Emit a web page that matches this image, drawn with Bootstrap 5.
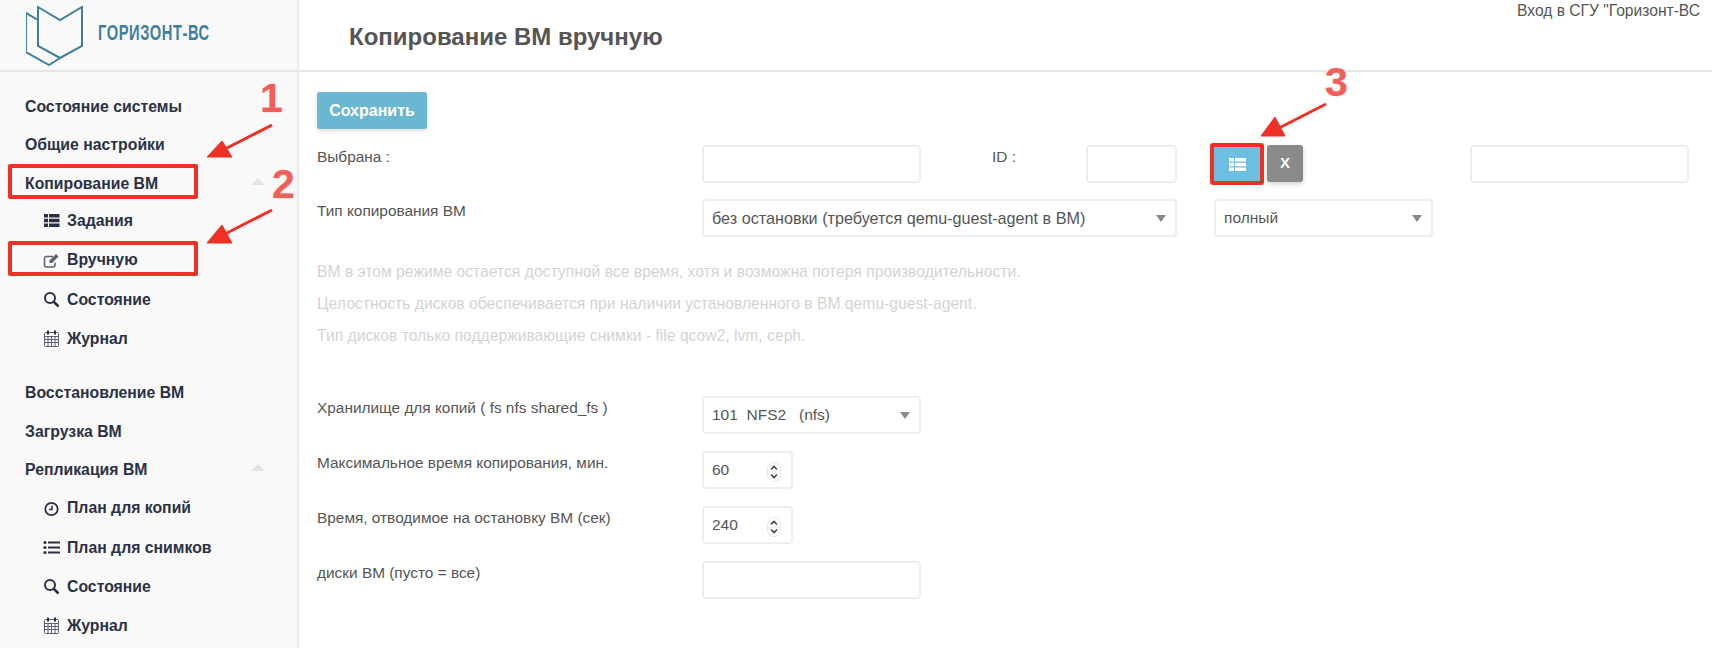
<!DOCTYPE html>
<html lang="ru">
<head>
<meta charset="utf-8">
<title>Копирование ВМ вручную</title>
<link href="https://cdn.jsdelivr.net/npm/bootstrap@5.3.0/dist/css/bootstrap.min.css" rel="stylesheet">
<style>
html,body{height:648px;overflow:hidden;background:#fff}
body{font-family:"Liberation Sans",Arial,sans-serif;font-size:15.5px;color:#555;position:relative}
.side{width:299px;flex:none;height:648px;background:#f9f9f9;border-right:2px solid #eaeaea}
.brand{height:72px;border-bottom:2px solid #e6e6e6;padding-left:26px;gap:8px}
.brand-name{display:inline-block;font-weight:700;font-size:21.5px;color:#3f7f9c;letter-spacing:.8px;line-height:1;margin-top:-3px;transform:scaleX(.685);transform-origin:left center;white-space:nowrap}
.menu{padding-top:16px}
.menu-top{height:38.2px;padding-left:25px;padding-right:32px;font-weight:700;font-size:15.8px;color:#2b3145}
.menu-sub{height:39.2px;padding-left:43px;font-weight:700;font-size:15.8px;color:#2b3145;gap:7px}
.menu-sub svg{width:17px;height:17px;flex:none}
.tight{margin-top:-1.2px}
.caret-up{width:0;height:0;border-left:7px solid transparent;border-right:7px solid transparent;border-bottom:7px solid #e4e4e4;margin-top:-4px}
.spaced{margin-top:16px}
.topbar{height:72px;border-bottom:2px solid #e6e6e6;padding-left:50px}
.page-title{font-size:24px;font-weight:700;color:#555;margin:0;line-height:1;padding-top:4px}
.login-link{top:3px;right:12px;font-size:15.6px;color:#555;white-space:nowrap;line-height:16px}
.work{padding:20px 0 0 18px}
.btn-save{width:110px;height:37px;background:#6ab7d1;border:0;color:#fff;font-weight:700;font-size:16px;border-radius:3px;box-shadow:0 2px 5px rgba(0,0,0,.14);padding:0;margin-bottom:16px;display:block}
.frow{height:38px;margin-bottom:16px}
.frow.tall{margin-bottom:17px}
.lbl{width:385px;flex:none;padding-top:2px;line-height:20px;font-size:15.4px;color:#555;margin:0}
.fld{height:38px;border:2px solid #eee;border-radius:4px;font-size:15.5px;color:#555;padding:0 8px;background-color:#fff;box-shadow:none;font-family:"Liberation Sans",sans-serif}
.w219{width:219px;flex:none}
.w91{width:91px;flex:none}
.w475{width:475px;flex:none;font-size:16.2px}
.id-lbl{width:94px;margin-left:71px;flex:none;padding-top:2px;line-height:20px;margin-bottom:0;font-size:15.4px}
.pick{width:54px;height:42px;margin:-2px 3px 0 33px;background:#6ebee2;border:4px solid #ee3124;border-radius:3px;padding:0}
.clear{width:36px;height:37px;background:#8a8a8a;border:0;border-radius:3px;color:#fff;font-weight:700;font-size:15px;padding:0;box-shadow:0 2px 5px rgba(0,0,0,.18)}
.far{margin-left:167px}
.sel{appearance:none;-webkit-appearance:none;background-image:url("data:image/svg+xml,%3Csvg xmlns='http://www.w3.org/2000/svg' width='10' height='7'%3E%3Cpath d='M0 0h10L5 7z' fill='%23888'/%3E%3C/svg%3E");background-repeat:no-repeat;background-position:right 9px center;background-size:10px 7px}
.gapl{margin-left:37px}
.help{color:#d4d4d4;font-size:15.7px;line-height:20px;margin:0 0 12px}
.help.first{padding-top:9px}
.help.last{margin-bottom:50px}
.num-wrap{width:91px;height:38px}
.spin{right:12px;top:11px;width:14px;height:20px}
.marks{left:0;top:0;width:1712px;height:648px;pointer-events:none}
.digit{font-weight:700;font-size:41px;fill:#f0605a;paint-order:stroke;stroke:#fbd5d2;stroke-width:1px}
</style>
</head>
<body>
<div class="d-flex">
  <aside class="side">
    <div class="brand d-flex align-items-center">
      <svg width="64" height="62" viewBox="0 0 64 62" fill="none" stroke="#3f7f9c" stroke-width="2">
        <path d="M12 16 L0 9 V48 L23 61 L34 54"/>
        <path d="M12 3 L34 16 L56 3 V42 L34 54 L12 42 Z"/>
      </svg>
      <span class="brand-name">ГОРИЗОНТ-ВС</span>
    </div>
    <nav class="menu d-flex flex-column">
      <div class="menu-top d-flex align-items-center">Состояние системы</div>
      <div class="menu-top d-flex align-items-center">Общие настройки</div>
      <div class="menu-top d-flex align-items-center justify-content-between">Копирование ВМ<span class="caret-up"></span></div>
      <div class="menu-sub tight d-flex align-items-center"><svg viewBox="0 0 17 17" fill="#2b3145"><path d="M1 2h4v3.600H1zM6 2h10.500v3.600H6zM1 6.700h4v3.600H1zM6 6.700h10.500v3.600H6zM1 11.400h4v3.600H1zM6 11.400h10.500v3.600H6z"/></svg>Задания</div>
      <div class="menu-sub d-flex align-items-center"><svg viewBox="0 0 17 17" fill="none"><path d="M12 10.500V13a2 2 0 0 1-2 2H3.500a2 2 0 0 1-2-2V6.500a2 2 0 0 1 2-2H10" stroke="#5c6272" stroke-width="1.500"/><path d="M6.500 8.500 13 2l2.500 2.500L9 11H6.500z" fill="#5c6272"/></svg>Вручную</div>
      <div class="menu-sub d-flex align-items-center"><svg viewBox="0 0 17 17" fill="none" stroke="#2b3145" stroke-width="2"><circle cx="7" cy="7" r="5"/><path d="M10.500 10.500l5 5" stroke-width="2.500"/></svg>Состояние</div>
      <div class="menu-sub d-flex align-items-center"><svg viewBox="0 0 17 17" fill="none" stroke="#5c6272" stroke-width="1"><rect x="1.500" y="2.500" width="14" height="14" rx="1"/><path d="M1.500 6.500h14M1.500 9.500h14M1.500 12.500h14M5 6.500v10M8.500 6.500v10M12 6.500v10"/><path d="M5 .5v4M12 .5v4" stroke="#2b3145" stroke-width="2"/></svg>Журнал</div>
      <div class="menu-top d-flex align-items-center spaced">Восстановление ВМ</div>
      <div class="menu-top d-flex align-items-center">Загрузка ВМ</div>
      <div class="menu-top d-flex align-items-center justify-content-between">Репликация ВМ<span class="caret-up"></span></div>
      <div class="menu-sub d-flex align-items-center"><svg viewBox="0 0 17 17" fill="none" stroke="#2b3145"><circle cx="8.500" cy="9" r="6.200" stroke-width="1.800"/><path d="M9 5.500V9.500H6" stroke-width="1.500"/></svg>План для копий</div>
      <div class="menu-sub d-flex align-items-center"><svg viewBox="0 0 17 17" fill="#2b3145"><circle cx="2" cy="3.500" r="1.600"/><circle cx="2" cy="8.500" r="1.600"/><circle cx="2" cy="13.500" r="1.600"/><path d="M5 2.500h12v2H5zM5 7.500h12v2H5zM5 12.500h12v2H5z"/></svg>План для снимков</div>
      <div class="menu-sub d-flex align-items-center"><svg viewBox="0 0 17 17" fill="none" stroke="#2b3145" stroke-width="2"><circle cx="7" cy="7" r="5"/><path d="M10.500 10.500l5 5" stroke-width="2.500"/></svg>Состояние</div>
      <div class="menu-sub d-flex align-items-center"><svg viewBox="0 0 17 17" fill="none" stroke="#5c6272" stroke-width="1"><rect x="1.500" y="2.500" width="14" height="14" rx="1"/><path d="M1.500 6.500h14M1.500 9.500h14M1.500 12.500h14M5 6.500v10M8.500 6.500v10M12 6.500v10"/><path d="M5 .5v4M12 .5v4" stroke="#2b3145" stroke-width="2"/></svg>Журнал</div>
    </nav>
  </aside>
  <main class="flex-grow-1">
    <header class="topbar d-flex align-items-center position-relative">
      <h1 class="page-title">Копирование ВМ вручную</h1>
      <div class="login-link position-absolute">Вход в СГУ "Горизонт-ВС</div>
    </header>
    <div class="work">
      <button class="btn btn-save" type="button">Сохранить</button>
      <div class="frow d-flex align-items-start">
        <label class="lbl">Выбрана :</label>
        <input class="fld w219 form-control" type="text">
        <label class="id-lbl">ID :</label>
        <input class="fld w91 form-control" type="text">
        <button class="btn pick flex-shrink-0 d-flex align-items-center justify-content-center" type="button" aria-label="Список"><svg width="17" height="13" viewBox="0 0 17 13" fill="#fff"><path d="M0 0h5v3.500H0zM6 0h11v3.500H6zM0 4.700h5v3.500H0zM6 4.700h11v3.500H6zM0 9.400h5v3.500H0zM6 9.400h11v3.500H6z"/></svg></button>
        <button class="btn clear flex-shrink-0" type="button">X</button>
        <input class="fld w219 far form-control" type="text">
      </div>
      <div class="frow d-flex align-items-start">
        <label class="lbl">Тип копирования ВМ</label>
        <select class="fld sel w475 form-select"><option>без остановки (требуется qemu-guest-agent в ВМ)</option></select>
        <select class="fld sel w219 gapl form-select"><option>полный</option></select>
      </div>
      <p class="help first">ВМ в этом режиме остается доступной все время, хотя и возможна потеря производительности.</p>
      <p class="help">Целостность дисков обеспечивается при наличии установленного в ВМ qemu-guest-agent.</p>
      <p class="help last">Тип дисков только поддерживающие снимки - file qcow2, lvm, ceph.</p>
      <div class="frow tall d-flex align-items-start">
        <label class="lbl">Хранилище для копий ( fs nfs shared_fs )</label>
        <select class="fld sel w219 form-select"><option>101&nbsp; NFS2 &nbsp; (nfs)</option></select>
      </div>
      <div class="frow tall d-flex align-items-start">
        <label class="lbl">Максимальное время копирования, мин.</label>
        <div class="num-wrap position-relative"><input class="fld w-100 form-control" type="text" value="60"><svg class="spin position-absolute" viewBox="0 0 14 20" fill="none" stroke="#444" stroke-width="1.600"><rect x=".5" y=".5" width="13" height="19" rx="6.500" stroke="#e8e8e8" stroke-width="1"/><path d="M.5 10h13" stroke="#e8e8e8" stroke-width="1"/><path d="M4 7.500l3-3 3 3M4 12.500l3 3 3-3"/></svg></div>
      </div>
      <div class="frow tall d-flex align-items-start">
        <label class="lbl">Время, отводимое на остановку ВМ (сек)</label>
        <div class="num-wrap position-relative"><input class="fld w-100 form-control" type="text" value="240"><svg class="spin position-absolute" viewBox="0 0 14 20" fill="none" stroke="#444" stroke-width="1.600"><rect x=".5" y=".5" width="13" height="19" rx="6.500" stroke="#e8e8e8" stroke-width="1"/><path d="M.5 10h13" stroke="#e8e8e8" stroke-width="1"/><path d="M4 7.500l3-3 3 3M4 12.500l3 3 3-3"/></svg></div>
      </div>
      <div class="frow d-flex align-items-start">
        <label class="lbl">диски ВМ (пусто = все)</label>
        <input class="fld w219 form-control" type="text">
      </div>
    </div>
  </main>
</div>
<svg class="marks position-absolute" viewBox="0 0 1712 648">
  <g fill="none" stroke="#ee3124" stroke-width="4" stroke-linejoin="round">
    <rect x="10" y="166" width="186" height="31"/>
    <rect x="10" y="243" width="186" height="31"/>
  </g>
  <g stroke="#ee3124" stroke-width="3" fill="#ee3124">
    <line x1="272" y1="125" x2="225" y2="149"/>
    <path d="M207 157 L222 141 L232 157 Z" stroke-width="1"/>
    <line x1="272" y1="210" x2="225" y2="234"/>
    <path d="M207 243 L222 225 L232 243 Z" stroke-width="1"/>
    <line x1="1326" y1="104" x2="1279" y2="128"/>
    <path d="M1261 136 L1275 117 L1285 136 Z" stroke-width="1"/>
  </g>
  <text class="digit" x="260" y="112">1</text>
  <text class="digit" x="272" y="198">2</text>
  <text class="digit" x="1325" y="96">3</text>
</svg>
</body>
</html>
